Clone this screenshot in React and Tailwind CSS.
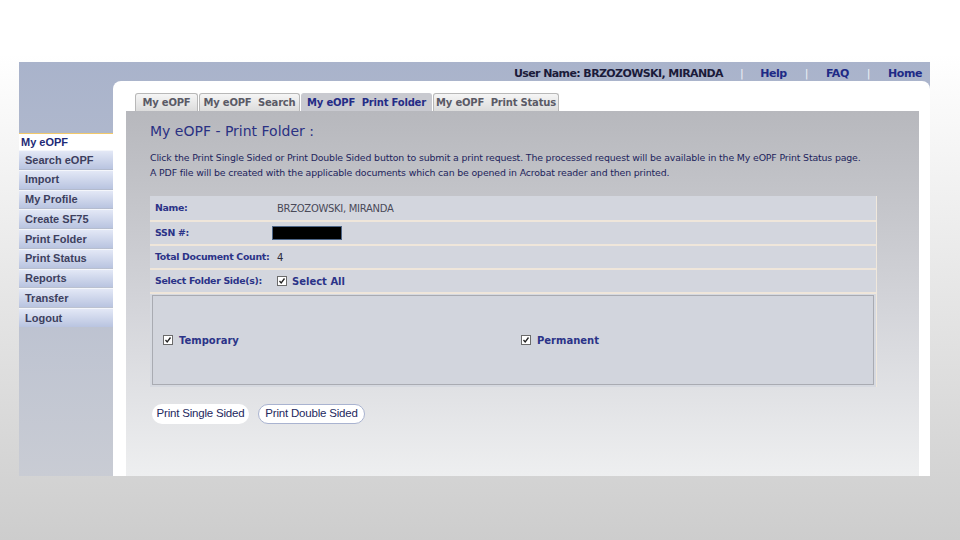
import { Fragment } from "react";

const sideItems = [
  "Search eOPF",
  "Import",
  "My Profile",
  "Create SF75",
  "Print Folder",
  "Print Status",
  "Reports",
  "Transfer",
  "Logout",
];

const tabs = [
  { label: "My eOPF", w: "w-[63px]" },
  { label: "My eOPF  Search", w: "w-[101px]" },
  { label: "My eOPF  Print Folder", w: "w-[131px]", active: true },
  { label: "My eOPF  Print Status", w: "w-[126px]" },
];

function Check({ className = "" }) {
  return (
    <span
      className={`inline-flex w-[10px] h-[10px] border border-[#6b6b6b] bg-white items-center justify-center ${className}`}
    >
      <svg width="8" height="8" viewBox="0 0 8 8">
        <path d="M1.5 4 L3.2 6 L6.5 1.5" stroke="#222" strokeWidth="1.3" fill="none" />
      </svg>
    </span>
  );
}

function Row({ label, children, first }) {
  return (
    <div
      className={`flex items-center h-[24px] bg-[#d3d6de] ${first ? "" : "border-t-2 border-[#efe6da]"}`}
    >
      <div className="w-[127px] pl-[5px] whitespace-nowrap text-[9.4px] font-bold text-[#2b3388] font-['DejaVu_Sans',sans-serif] tracking-[-0.3px]">
        {label}
      </div>
      <div className="flex items-center">{children}</div>
    </div>
  );
}

export default function App() {
  return (
    <div className="w-[960px] h-[540px] overflow-hidden bg-gradient-to-b from-white from-[10%] to-[#cdcdcd] pt-[62px] pl-[19px]">
      <div className="w-[911px] h-[414px] flex flex-col bg-gradient-to-b from-[#a9b3cb] to-[#c9ccd4]">
        {/* top bar */}
        <div className="h-[19px] flex items-start pt-[6px] leading-[12px] justify-end pr-[8px] text-[11px] font-bold font-['DejaVu_Sans',sans-serif] tracking-[-0.45px]">
          <span className="text-[#1b1b3a] tracking-[-0.6px]">User Name: BRZOZOWSKI, MIRANDA</span>
          <span className="mx-[17px] text-[#eef0f6] font-normal">|</span>
          <span className="text-[#1e2a86]">Help</span>
          <span className="mx-[18px] text-[#eef0f6] font-normal">|</span>
          <span className="text-[#1e2a86]">FAQ</span>
          <span className="mx-[18px] text-[#eef0f6] font-normal">|</span>
          <span className="text-[#1e2a86]">Home</span>
        </div>

        <div className="flex flex-1">
          {/* sidebar */}
          <div className="w-[94px] pt-[52px] font-['Liberation_Sans',sans-serif]">
            <div className="h-[17px] bg-white border-t border-[#f2c96a] pl-[2px] flex items-center text-[11px] font-bold text-[#1e2a76]">
              My eOPF
            </div>
            {sideItems.map((s) => (
              <div
                key={s}
                className="h-[18.75px] mb-px bg-gradient-to-b from-[#e3e8f6] to-[#b9c4e0] border-t border-[#f4f6fb] pl-[6px] flex items-center text-[11px] font-bold text-[#3d3f5e]"
              >
                {s}
              </div>
            ))}
          </div>

          {/* main panel */}
          <div className="flex-1 bg-white rounded-t-[8px] pt-[12px] pl-[13px] pr-[11px] flex flex-col">
            <div className="h-[18px] flex pl-[9px] gap-[1px] font-['DejaVu_Sans',sans-serif]">
              {tabs.map((t) => (
                <div
                  key={t.label}
                  className={`${t.w} h-[18px] rounded-t-[3px] border border-b-0 flex items-center justify-center text-[10px] font-bold whitespace-pre tracking-[-0.2px] ${
                    t.active
                      ? "bg-[#c9cad0] border-[#c9cad0] text-[#242c86]"
                      : "bg-gradient-to-b from-[#f5f5f5] to-[#dcdcdc] border-[#b8b8b8] text-[#5a5a66]"
                  }`}
                >
                  {t.label}
                </div>
              ))}
            </div>

            <div className="flex-1 bg-gradient-to-b from-[#b7b8bd] via-[#d4d5da] via-[55%] to-[#eeeff0] pl-[24px] pt-[10px] font-['DejaVu_Sans',sans-serif]">
              <div className="text-[14px] text-[#2a3183] leading-[20px]">
                My eOPF - Print Folder :
              </div>
              <div className="mt-[9px] text-[9.4px] leading-[15px] text-[#1d1f5c] tracking-[-0.15px] whitespace-nowrap">
                <div>
                  Click the Print Single Sided or Print Double Sided button to submit a print request. The processed request will be available in the My eOPF Print Status page.
                </div>
                <div>
                  A PDF file will be created with the applicable documents which can be opened in Acrobat reader and then printed.
                </div>
              </div>

              <div className="mt-[16px] w-[727px] bg-[#d6d9e0] border-r border-[#f0e8dc]">
                <Row label="Name:" first>
                  <span className="text-[10px] text-[#4a4a58] tracking-[-0.3px]">BRZOZOWSKI, MIRANDA</span>
                </Row>
                <Row label="SSN #:">
                  <span className="-ml-[5px] w-[70px] h-[14px] bg-black border border-[#4d6587]" />
                </Row>
                <Row label="Total Document Count:">
                  <span className="text-[10px] text-[#2b2b3a]">4</span>
                </Row>
                <Row label="Select Folder Side(s):">
                  <Check />
                  <span className="ml-[5px] text-[10px] font-bold text-[#2b3388]">Select All</span>
                </Row>
                <div className="border-t-2 border-[#efe6da] px-[2px] pb-[2px] pt-[1px]">
                  <div className="h-[90px] border border-[#a9abb2] bg-[#d2d5dd] flex items-center pl-[10px] text-[10px] font-bold text-[#2b3388]">
                    <div className="w-[358px] flex items-center">
                      <Check />
                      <span className="ml-[6px]">Temporary</span>
                    </div>
                    <div className="flex items-center">
                      <Check />
                      <span className="ml-[6px]">Permanent</span>
                    </div>
                  </div>
                </div>
              </div>

              <div className="mt-[17px] flex gap-[9px] ml-[2px] font-['Liberation_Sans',sans-serif]">
                <button className="h-[20px] px-[4px] rounded-full bg-white text-[11.5px] text-[#24285e] w-[97px] tracking-[-0.2px]">
                  Print Single Sided
                </button>
                <button className="h-[20px] px-[4px] rounded-full bg-white border border-[#a9b3d0] text-[11.5px] text-[#24285e] w-[107px] tracking-[-0.2px]">
                  Print Double Sided
                </button>
              </div>
            </div>
          </div>
        </div>
      </div>
    </div>
  );
}
